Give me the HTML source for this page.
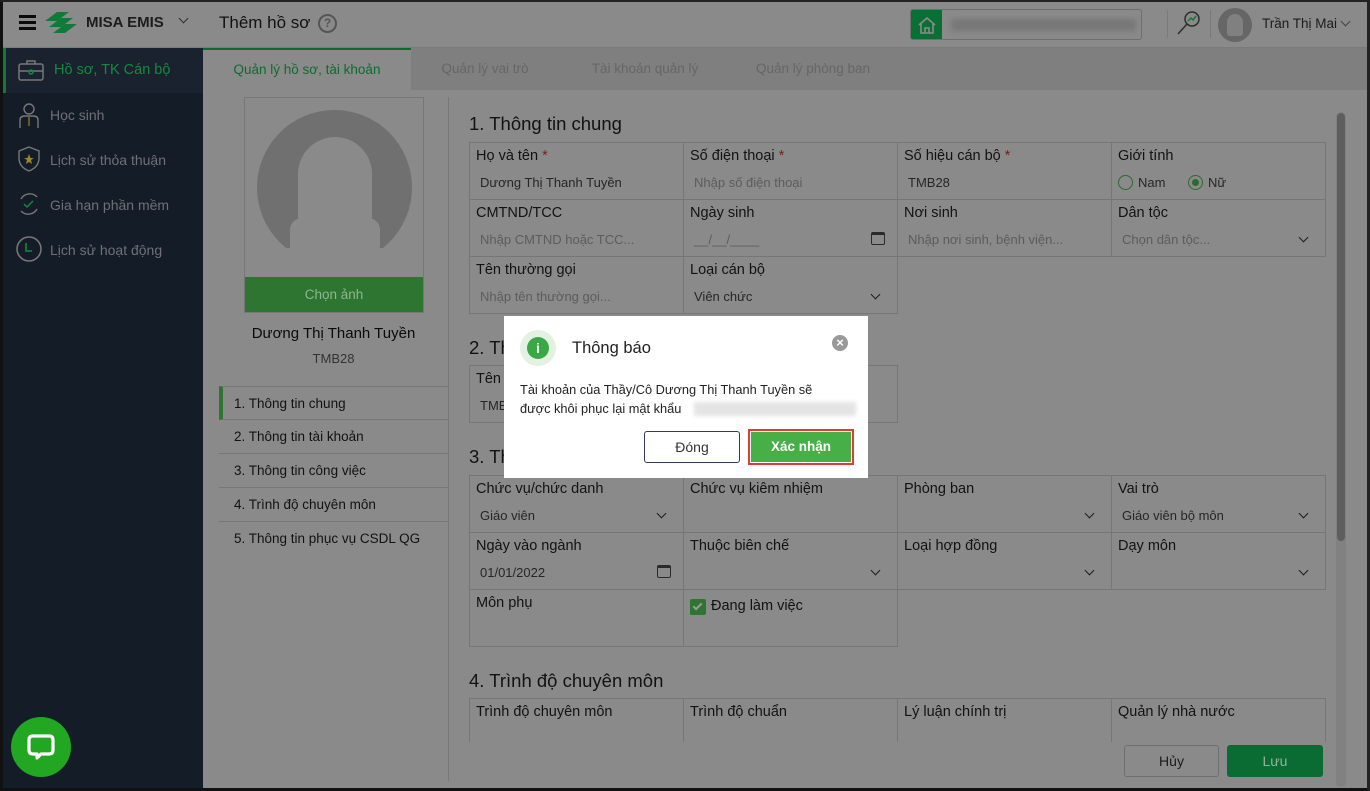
<!DOCTYPE html>
<html><head><meta charset="utf-8">
<style>
*{box-sizing:border-box;margin:0;padding:0}
body{width:1370px;height:791px;overflow:hidden;font-family:"Liberation Sans","DejaVu Sans",sans-serif;background:#8a8a8a;position:relative;color:#121212}
.a{position:absolute}
.hdr{left:0;top:0;width:1370px;height:48px;background:#8a8a8a;border-bottom:1px solid #7b7b7b}
.side{left:3px;top:48px;width:200px;height:743px;background:#141c28}
.side .it{position:absolute;left:0;width:200px;height:45px;color:#6e7176;font-size:14px;line-height:45px;padding-left:47px}
.tabs{left:203px;top:48px;width:1167px;height:42px;background:#7f7f7f}
.tab{position:absolute;top:0;height:42px;line-height:42px;font-size:13.5px;color:#666;text-align:center}
.cell{position:absolute;border:1px solid #767676;width:215px;height:58px;background:#8a8a8a}
.cell .l{position:absolute;left:6px;top:5px;font-size:14.5px;color:#121212}
.cell .v{position:absolute;left:10px;top:32px;font-size:13px;color:#262626}
.cell .p{color:#5c5c5c}
.req{color:#7a1f1a}
.chev{position:absolute;right:18px;top:34px;width:7px;height:7px;border-right:1.6px solid #1c1c1c;border-bottom:1.6px solid #1c1c1c;transform:rotate(45deg)}
.sec{position:absolute;left:469px;font-size:18.5px;color:#121212}
.mi{position:absolute;left:219px;width:229px;height:34px;border-bottom:1px solid #777;font-size:13.5px;line-height:34px;padding-left:15px;color:#121212}
.cal{position:absolute;right:12px;top:32px;width:14px;height:13px;border:1.4px solid #2a2a2a;border-top-width:3px;border-radius:2px}
</style></head><body>
<!-- header -->
<div class="a hdr">
 <div class="a" style="left:19px;top:15px;width:17px;height:2.5px;background:#0a0a0a;box-shadow:0 6px 0 #0a0a0a,0 12px 0 #0a0a0a"></div>
 <svg class="a" style="left:43px;top:9px" width="36" height="28" viewBox="0 0 36 28"><path d="M2 12 L14 3 L26 3 L14 12Z" fill="#117a38"/><path d="M6 18 L18 9 L30 9 L18 18Z" fill="#117a38"/><path d="M10 24 L22 15 L34 15 L22 24Z" fill="#117a38"/></svg>
 <div class="a" style="left:86px;top:14px;font-size:15px;font-weight:bold;color:#1c1c1c">MISA EMIS</div>
 <div class="a" style="left:180px;top:15px;width:7px;height:7px;border-right:1.5px solid #2e2e2e;border-bottom:1.5px solid #2e2e2e;transform:rotate(45deg)"></div>
 <div class="a" style="left:219px;top:13px;font-size:17px;color:#121212">Thêm hồ sơ</div>
 <div class="a" style="left:318px;top:14px;width:19px;height:19px;border:2px solid #555;border-radius:50%;font-size:12px;color:#555;text-align:center;line-height:15px;font-weight:bold">?</div>
 <div class="a" style="left:910px;top:9px;width:232px;height:31px;border:1px solid #6e6e6e;border-radius:3px;overflow:hidden">
  <div class="a" style="left:0;top:0;width:31px;height:31px;background:#0a6e35"></div>
  <svg class="a" style="left:6px;top:5px" width="20" height="20" viewBox="0 0 20 20" fill="none" stroke="#8a8a8a" stroke-width="1.6"><path d="M2 10 L10 3 L18 10 M4 9 V18 H16 V9 M8 18 V13 H12 V18"/></svg>
  <div class="a" style="left:40px;top:9px;width:185px;height:12px;background:#777;filter:blur(3px)"></div>
 </div>
 <div class="a" style="left:1167px;top:10px;width:1px;height:28px;background:#7a7a7a"></div>
 <svg class="a" style="left:1175px;top:9px" width="28" height="28" viewBox="0 0 28 28" fill="none" stroke="#2e2e2e" stroke-width="1.5"><circle cx="17" cy="10" r="7"/><path d="M12 15 L3 25"/><path d="M13 12 L16 9 L18 11 L21 7" stroke="#117a38"/></svg>
 <div class="a" style="left:1210px;top:10px;width:1px;height:28px;background:#7a7a7a"></div>
 <div class="a" style="left:1218px;top:8px;width:34px;height:34px;border-radius:50%;background:#666"></div>
 <div class="a" style="left:1227px;top:14px;width:16px;height:22px;border-radius:8px 8px 3px 3px;background:#808080"></div>
 <div class="a" style="left:1262px;top:16px;font-size:13.5px;color:#1c1c1c">Trần Thị Mai</div>
 <div class="a" style="left:1342px;top:18px;width:7px;height:7px;border-right:1.3px solid #444;border-bottom:1.3px solid #444;transform:rotate(45deg)"></div>
</div>
<!-- sidebar -->
<div class="a side">
 <div class="it" style="top:0;background:#1a2230;border-left:3px solid #117a38;color:#158a3c;font-size:14.5px;padding-left:48px">Hồ sơ, TK Cán bộ</div>
 <svg class="a" style="left:14px;top:10px" width="28" height="24" viewBox="0 0 28 24" fill="none" stroke="#777" stroke-width="1.5"><rect x="2" y="6" width="24" height="16" rx="2"/><path d="M10 6 V3 H18 V6 M2 13 H26"/><circle cx="14" cy="14" r="2" stroke="#158a3c"/></svg>
 <div class="it" style="top:45px">Học sinh</div>
 <svg class="a" style="left:14px;top:54px" width="24" height="28" viewBox="0 0 24 28" fill="none" stroke="#777" stroke-width="1.4"><circle cx="12" cy="7" r="5"/><path d="M3 26 V18 Q3 14 8 14 H16 Q21 14 21 18 V26"/><path d="M12 15 V24" stroke="#8a7420"/></svg>
 <div class="it" style="top:90px">Lịch sử thỏa thuận</div>
 <svg class="a" style="left:14px;top:97px" width="24" height="28" viewBox="0 0 24 28" fill="none" stroke="#777" stroke-width="1.4"><path d="M12 2 L22 6 V13 Q22 22 12 26 Q2 22 2 13 V6Z"/><path d="M12 9 L13.5 13 L17 13 L14 15 L15 19 L12 17 L9 19 L10 15 L7 13 L10.5 13Z" fill="#a08420" stroke="none"/></svg>
 <div class="it" style="top:135px">Gia hạn phần mềm</div>
 <svg class="a" style="left:13px;top:143px" width="26" height="26" viewBox="0 0 26 26" fill="none" stroke="#777" stroke-width="1.4"><path d="M5 8 A10 10 0 0 1 21 6 M21 18 A10 10 0 0 1 5 20"/><path d="M8 13 L11 16 L17 10" stroke="#158a3c"/></svg>
 <div class="it" style="top:180px">Lịch sử hoạt động</div>
 <svg class="a" style="left:12px;top:187px" width="28" height="28" viewBox="0 0 28 28" fill="none" stroke-width="1.6"><circle cx="14" cy="14" r="12" stroke="#777"/><path d="M11 8 V16 H17" stroke="#158a3c"/></svg>
</div>
<!-- tabs -->
<div class="a tabs">
 <div class="tab" style="left:0;width:208px;background:#8a8a8a;border-top:2px solid #0b6a30;color:#0f6a30;line-height:40px">Quản lý hồ sơ, tài khoản</div>
 <div class="tab" style="left:207px;width:150px">Quản lý vai trò</div>
 <div class="tab" style="left:357px;width:170px">Tài khoản quản lý</div>
 <div class="tab" style="left:520px;width:180px">Quản lý phòng ban</div>
</div>
<!-- left panel -->
<div class="a" style="left:244px;top:97px;width:180px;height:216px;border:1px solid #777;background:#8a8a8a;overflow:hidden">
 <div class="a" style="left:12px;top:12px;width:155px;height:155px;border-radius:50%;background:#707070"></div>
 <div class="a" style="left:53px;top:39px;width:74px;height:100px;border-radius:37px 37px 20px 20px;background:#8a8a8a"></div>
 <div class="a" style="left:45px;top:120px;width:90px;height:60px;border-radius:12px 12px 0 0;background:#8a8a8a"></div>
 <div class="a" style="left:25px;top:150px;width:130px;height:30px;background:#8a8a8a"></div>
 <div class="a" style="left:-1px;top:179px;width:180px;height:36px;background:#2f7532;color:#8fb58f;font-size:13.5px;text-align:center;line-height:36px">Chọn ảnh</div>
</div>
<div class="a" style="left:219px;top:325px;width:229px;text-align:center;font-size:15px;color:#0a0a0a">Dương Thị Thanh Tuyền</div>
<div class="a" style="left:219px;top:351px;width:229px;text-align:center;font-size:13px;color:#333">TMB28</div>
<div class="mi" style="top:386px;border-top:1px solid #777;border-left:4px solid #2f7532;padding-left:11px">1. Thông tin chung</div>
<div class="mi" style="top:420px">2. Thông tin tài khoản</div>
<div class="mi" style="top:454px">3. Thông tin công việc</div>
<div class="mi" style="top:488px">4. Trình độ chuyên môn</div>
<div class="mi" style="top:522px;border:none">5. Thông tin phục vụ CSDL QG</div>
<div class="a" style="left:448px;top:97px;width:1px;height:684px;background:#777"></div>
<!-- form -->
<div class="sec" style="top:113px">1. Thông tin chung</div>
<div class="cell" style="left:469px;top:142px"><div class="l">Họ và tên <span class="req">*</span></div><div class="v">Dương Thị Thanh Tuyền</div></div>
<div class="cell" style="left:683px;top:142px"><div class="l">Số điện thoại <span class="req">*</span></div><div class="v p">Nhập số điện thoại</div></div>
<div class="cell" style="left:897px;top:142px"><div class="l">Số hiệu cán bộ <span class="req">*</span></div><div class="v">TMB28</div></div>
<div class="cell" style="left:1111px;top:142px"><div class="l">Giới tính</div>
 <div class="a" style="left:6px;top:32px;width:15px;height:15px;border:1.5px solid #2a6a2a;border-radius:50%"></div><div class="a" style="left:26px;top:32px;font-size:13px;color:#262626">Nam</div>
 <div class="a" style="left:76px;top:32px;width:15px;height:15px;border:1.5px solid #2a6a2a;border-radius:50%"><div class="a" style="left:2.5px;top:2.5px;width:7px;height:7px;border-radius:50%;background:#2a6a2a"></div></div><div class="a" style="left:96px;top:32px;font-size:13px;color:#262626">Nữ</div></div>
<div class="cell" style="left:469px;top:199px"><div class="l">CMTND/TCC</div><div class="v p">Nhập CMTND hoặc TCC...</div></div>
<div class="cell" style="left:683px;top:199px"><div class="l">Ngày sinh</div><div class="v p">__/__/____</div><div class="cal"></div></div>
<div class="cell" style="left:897px;top:199px"><div class="l">Nơi sinh</div><div class="v p">Nhập nơi sinh, bệnh viện...</div></div>
<div class="cell" style="left:1111px;top:199px"><div class="l">Dân tộc</div><div class="v p">Chọn dân tộc...</div><div class="chev"></div></div>
<div class="cell" style="left:469px;top:256px"><div class="l">Tên thường gọi</div><div class="v p">Nhập tên thường gọi...</div></div>
<div class="cell" style="left:683px;top:256px"><div class="l">Loại cán bộ</div><div class="v">Viên chức</div><div class="chev"></div></div>
<div class="sec" style="top:337px">2. Thông tin tài khoản</div>
<div class="cell" style="left:469px;top:365px;width:429px"><div class="l">Tên đăng nhập</div><div class="v">TMB28</div></div>
<div class="sec" style="top:446px">3. Thông tin công việc</div>
<div class="cell" style="left:469px;top:475px"><div class="l">Chức vụ/chức danh</div><div class="v">Giáo viên</div><div class="chev"></div></div>
<div class="cell" style="left:683px;top:475px"><div class="l">Chức vụ kiêm nhiệm</div></div>
<div class="cell" style="left:897px;top:475px"><div class="l">Phòng ban</div><div class="chev"></div></div>
<div class="cell" style="left:1111px;top:475px"><div class="l">Vai trò</div><div class="v">Giáo viên bộ môn</div><div class="chev"></div></div>
<div class="cell" style="left:469px;top:532px"><div class="l">Ngày vào ngành</div><div class="v">01/01/2022</div><div class="cal"></div></div>
<div class="cell" style="left:683px;top:532px"><div class="l">Thuộc biên chế</div><div class="chev"></div></div>
<div class="cell" style="left:897px;top:532px"><div class="l">Loại hợp đồng</div><div class="chev"></div></div>
<div class="cell" style="left:1111px;top:532px"><div class="l">Dạy môn</div><div class="chev"></div></div>
<div class="cell" style="left:469px;top:589px"><div class="l">Môn phụ</div></div>
<div class="cell" style="left:683px;top:589px"><div class="a" style="left:6px;top:9px;width:16px;height:16px;background:#2f7532;border-radius:2px"><div class="a" style="left:5px;top:2px;width:5px;height:9px;border-right:2px solid #999;border-bottom:2px solid #999;transform:rotate(45deg)"></div></div><div class="a" style="left:27px;top:8px;font-size:14.5px">Đang làm việc</div></div>
<div class="sec" style="top:670px">4. Trình độ chuyên môn</div>
<div class="cell" style="left:469px;top:698px;height:44px;border-bottom:none"><div class="l">Trình độ chuyên môn</div></div>
<div class="cell" style="left:683px;top:698px;height:44px;border-bottom:none"><div class="l">Trình độ chuẩn</div></div>
<div class="cell" style="left:897px;top:698px;height:44px;border-bottom:none"><div class="l">Lý luận chính trị</div></div>
<div class="cell" style="left:1111px;top:698px;height:44px;border-bottom:none"><div class="l">Quản lý nhà nước</div></div>
<div class="a" style="left:449px;top:742px;width:885px;height:46px;background:#8a8a8a"></div>
<div class="a" style="left:1124px;top:745px;width:95px;height:32px;border:1px solid #6e6e6e;border-radius:3px;background:#8a8a8a;text-align:center;line-height:30px;font-size:14px;color:#1a1a1a">Hủy</div>
<div class="a" style="left:1227px;top:745px;width:96px;height:32px;border-radius:3px;background:#0a6c32;color:#8fb59a;text-align:center;line-height:32px;font-size:14px">Lưu</div>
<div class="a" style="left:1336px;top:112px;width:10px;height:675px;background:#818181;border-radius:5px"></div>
<div class="a" style="left:1337px;top:113px;width:8px;height:428px;background:#5e5e5e;border-radius:4px"></div>
<!-- frame -->
<div class="a" style="left:0;top:0;width:3px;height:791px;background:#111"></div>
<div class="a" style="left:0;top:788px;width:1370px;height:3px;background:#111"></div>
<div class="a" style="left:1367px;top:0;width:3px;height:791px;background:#222"></div>
<div class="a" style="left:0;top:0;width:1370px;height:2px;background:#222"></div>
<!-- chat -->
<div class="a" style="left:11px;top:717px;width:60px;height:60px;border-radius:50%;background:#22a722"></div>
<svg class="a" style="left:25px;top:731px" width="32" height="32" viewBox="0 0 32 32"><path d="M8 5 H24 Q28 5 28 9 V19 Q28 23 24 23 H16 L12 27 V23 H8 Q4 23 4 19 V9 Q4 5 8 5Z" fill="none" stroke="#fff" stroke-width="3.2" stroke-linejoin="round"/></svg>
<!-- dialog -->
<div class="a" style="left:504px;top:316px;width:364px;height:162px;background:#fff">
 <div class="a" style="left:16px;top:14px;width:36px;height:36px;border-radius:50%;background:#e3f1e3"></div>
 <div class="a" style="left:23px;top:21px;width:22px;height:22px;border-radius:50%;background:#3aa845;color:#fff;font-weight:bold;font-size:14px;text-align:center;line-height:22px">i</div>
 <div class="a" style="left:68px;top:23px;font-size:16.5px;color:#222">Thông báo</div>
 <div class="a" style="left:328px;top:19px;width:16px;height:16px;border-radius:50%;background:#999;color:#fff;font-size:13px;text-align:center;line-height:16px;font-weight:bold">×</div>
 <div class="a" style="left:16px;top:64px;font-size:12.8px;color:#222;line-height:19px">Tài khoản của Thầy/Cô Dương Thị Thanh Tuyền sẽ<br>được khôi phục lại mật khẩu</div>
 <div class="a" style="left:190px;top:86px;width:162px;height:14px;background:#e4e4e4;filter:blur(2px)"></div>
 <div class="a" style="left:140px;top:115px;width:96px;height:32px;border:1px solid #333c5a;border-radius:3px;text-align:center;line-height:30px;font-size:14px;color:#333">Đóng</div>
 <div class="a" style="left:244px;top:113px;width:106px;height:36px;border:2px solid #e53935"></div>
 <div class="a" style="left:247px;top:116px;width:100px;height:30px;background:#46b046;color:#fff;font-weight:bold;font-size:13.5px;text-align:center;line-height:30px">Xác nhận</div>
</div>
</body></html>
